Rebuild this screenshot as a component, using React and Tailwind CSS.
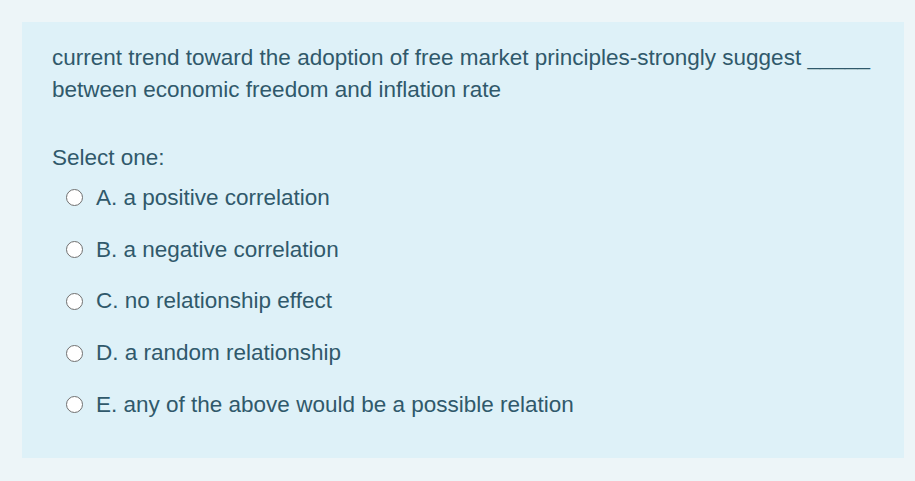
import React from 'react';

const options = [
  'A. a positive correlation',
  'B. a negative correlation',
  'C. no relationship effect',
  'D. a random relationship',
  'E. any of the above would be a possible relation',
];

export default function App() {
  return (
    <div className="w-[915px] h-[481px] bg-[#edf5f8] pt-[22px] pl-[22px]" style={{ fontFamily: '"Liberation Sans", Arial, sans-serif' }}>
      <div className="w-[882px] h-[436px] bg-[#def1f8] pl-[30px] pr-[30px] pt-[20px] text-[#30596b] text-[22.5px] leading-[32px]">
        <p>
          current trend toward the adoption of free market principles-strongly suggest _____ between economic freedom and inflation rate
        </p>

        <p className="mt-[36px]">Select one:</p>

        <div className="mt-[-2px] flex flex-col">
          {options.map(opt => (
            <label key={opt} className="flex items-center h-[51.75px] pl-[14px]">
              <span className="w-[17px] h-[17px] rounded-full border-[1.5px] border-[#707070] bg-white shrink-0" />
              <span className="ml-[13px]">{opt}</span>
            </label>
          ))}
        </div>
      </div>
    </div>
  );
}
